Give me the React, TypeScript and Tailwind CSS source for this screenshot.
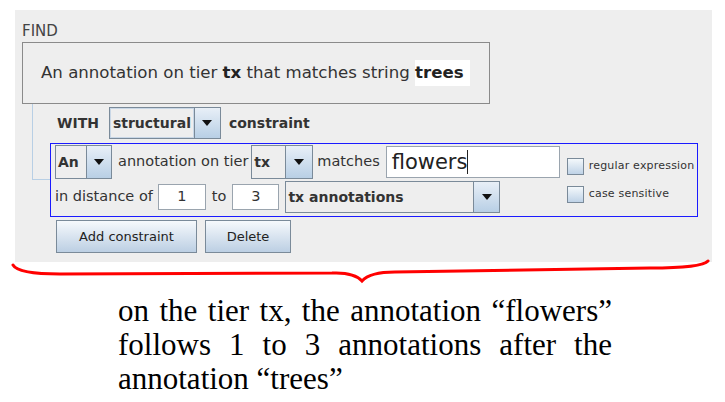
import React from "react";

// Java Metal/Ocean look-alike query panel with an annotation below

function ArrowButton({ className }: { className: string }) {
  return (
    <div
      className={
        "flex h-full items-center justify-center border-l border-[#7a8a99] bg-linear-to-b from-[#e8eff7] to-[#b8cfe5] " +
        className
      }
    >
      <svg width="10" height="6" viewBox="0 0 10 6">
        <path d="M0 0 L10 0 L5 6 Z" fill="#111" />
      </svg>
    </div>
  );
}

function Checkbox({ label }: { label: string }) {
  return (
    <div className="flex items-center gap-[5px]">
      <div className="h-[17px] w-[17px] border border-[#7a8a99] bg-linear-to-b from-[#f4f8fb] to-[#bfd3e7]" />
      <span className="text-[11px] tracking-[0.2px] text-[#333]">{label}</span>
    </div>
  );
}

export default function App() {
  return (
    <div className="relative h-[402px] w-[725px] overflow-hidden bg-white font-['DejaVu_Sans',sans-serif] text-[#333]">
      <div className="ml-[15px] mt-[10px] h-[252px] w-[697px] bg-[#eeeeee] pl-[7px] pt-[13px]">
        <div className="text-[15px] leading-[17px] text-[#444]">FIND</div>

        {/* query summary */}
        <div className="mt-[2px] flex h-[62px] w-[468px] items-center border border-[#8a8a8a] pl-[18px] text-[16.6px] text-[#333]">
          <span>
            An annotation on tier <b className="text-[#222]">tx</b> that matches string{" "}
            <span className="inline-block bg-white pr-[6px] leading-[26px]">
              <b className="text-[#222]">trees</b>
            </span>
          </span>
        </div>

        <div className="flex pl-[10px]">
          {/* tree connector */}
          <div className="w-[18px]">
            <div className="h-[76px] border-b border-l border-[#b8cfe5]" />
          </div>

          <div>
            {/* WITH row */}
            <div className="mt-[3px] flex h-[32px] items-center pl-[7px] text-[14px] font-bold text-[#333]">
              <span>WITH</span>
              <div className="ml-[10px] flex h-full w-[112px] border border-[#7a8a99]">
                <div className="flex flex-1 items-center border border-[#c9d7e6] pl-[2px]">structural</div>
                <ArrowButton className="w-[26px]" />
              </div>
              <span className="ml-[8px]">constraint</span>
            </div>

            {/* constraint box */}
            <div className="mt-[4px] flex h-[74px] w-[648px] border border-[#1a1aff] pl-[4px] pt-[1px] text-[14.5px]">
              <div className="flex flex-col">
                <div className="flex h-[34px] items-center">
                  <div className="flex h-full w-[57px] border border-[#7a8a99]">
                    <div className="flex flex-1 items-center pl-[2px] text-[14px] font-bold">An</div>
                    <ArrowButton className="w-[25px]" />
                  </div>
                  <span className="ml-[6px]">annotation on tier</span>
                  <div className="ml-[3px] flex h-full w-[62px] border border-[#7a8a99]">
                    <div className="flex flex-1 items-center pl-[2px] text-[14px] font-bold">tx</div>
                    <ArrowButton className="w-[27px]" />
                  </div>
                  <span className="ml-[4px]">matches</span>
                  <div className="ml-[6px] flex h-[32px] w-[174px] items-center border border-[#9aa4ae] bg-white pl-[5px] text-[21px] text-[#222]">
                    <span className="border-r border-[#222] leading-[24px]">flowers</span>
                  </div>
                </div>

                <div className="mt-[2px] flex h-[32px] items-center">
                  <span>in distance of</span>
                  <div className="ml-[5px] flex h-[26px] w-[48px] items-center justify-center border border-[#9aa4ae] bg-white">
                    1
                  </div>
                  <span className="ml-[6px]">to</span>
                  <div className="ml-[6px] flex h-[26px] w-[47px] items-center justify-center border border-[#9aa4ae] bg-white">
                    3
                  </div>
                  <div className="ml-[6px] flex h-full w-[215px] border border-[#7a8a99]">
                    <div className="flex flex-1 items-center pl-[2px] text-[14px] font-bold">tx annotations</div>
                    <ArrowButton className="w-[26px]" />
                  </div>
                </div>
              </div>

              <div className="ml-[7px] flex flex-col gap-[11px] pt-[13px]">
                <Checkbox label="regular expression" />
                <Checkbox label="case sensitive" />
              </div>
            </div>

            {/* buttons */}
            <div className="ml-[6px] mt-[3px] flex gap-[8px] text-[13px] text-[#222]">
              <button className="h-[33px] w-[141px] border border-[#7a8a99] bg-linear-to-b from-[#f6f9fc] to-[#bccfe3]">
                Add constraint
              </button>
              <button className="h-[33px] w-[86px] border border-[#7a8a99] bg-linear-to-b from-[#f6f9fc] to-[#bccfe3]">
                Delete
              </button>
            </div>
          </div>
        </div>
      </div>

      {/* red brace */}
      <svg className="absolute left-0 top-[255px]" width="725" height="35" viewBox="0 255 725 35">
        <path
          d="M13 265 Q18 274 60 274 L332 273 Q354 272 362 281 Q370 272 395 272 L650 268 Q702 268 708 261"
          fill="none"
          stroke="#ff0000"
          strokeWidth="3"
          strokeLinecap="round"
        />
      </svg>

      <p className="ml-[118px] mt-[32px] w-[494px] text-justify font-['Liberation_Serif',serif] text-[31px] leading-[34px] text-black">
        on the tier tx, the annotation “flowers” follows 1 to 3 annotations after the annotation “trees”
      </p>
    </div>
  );
}
